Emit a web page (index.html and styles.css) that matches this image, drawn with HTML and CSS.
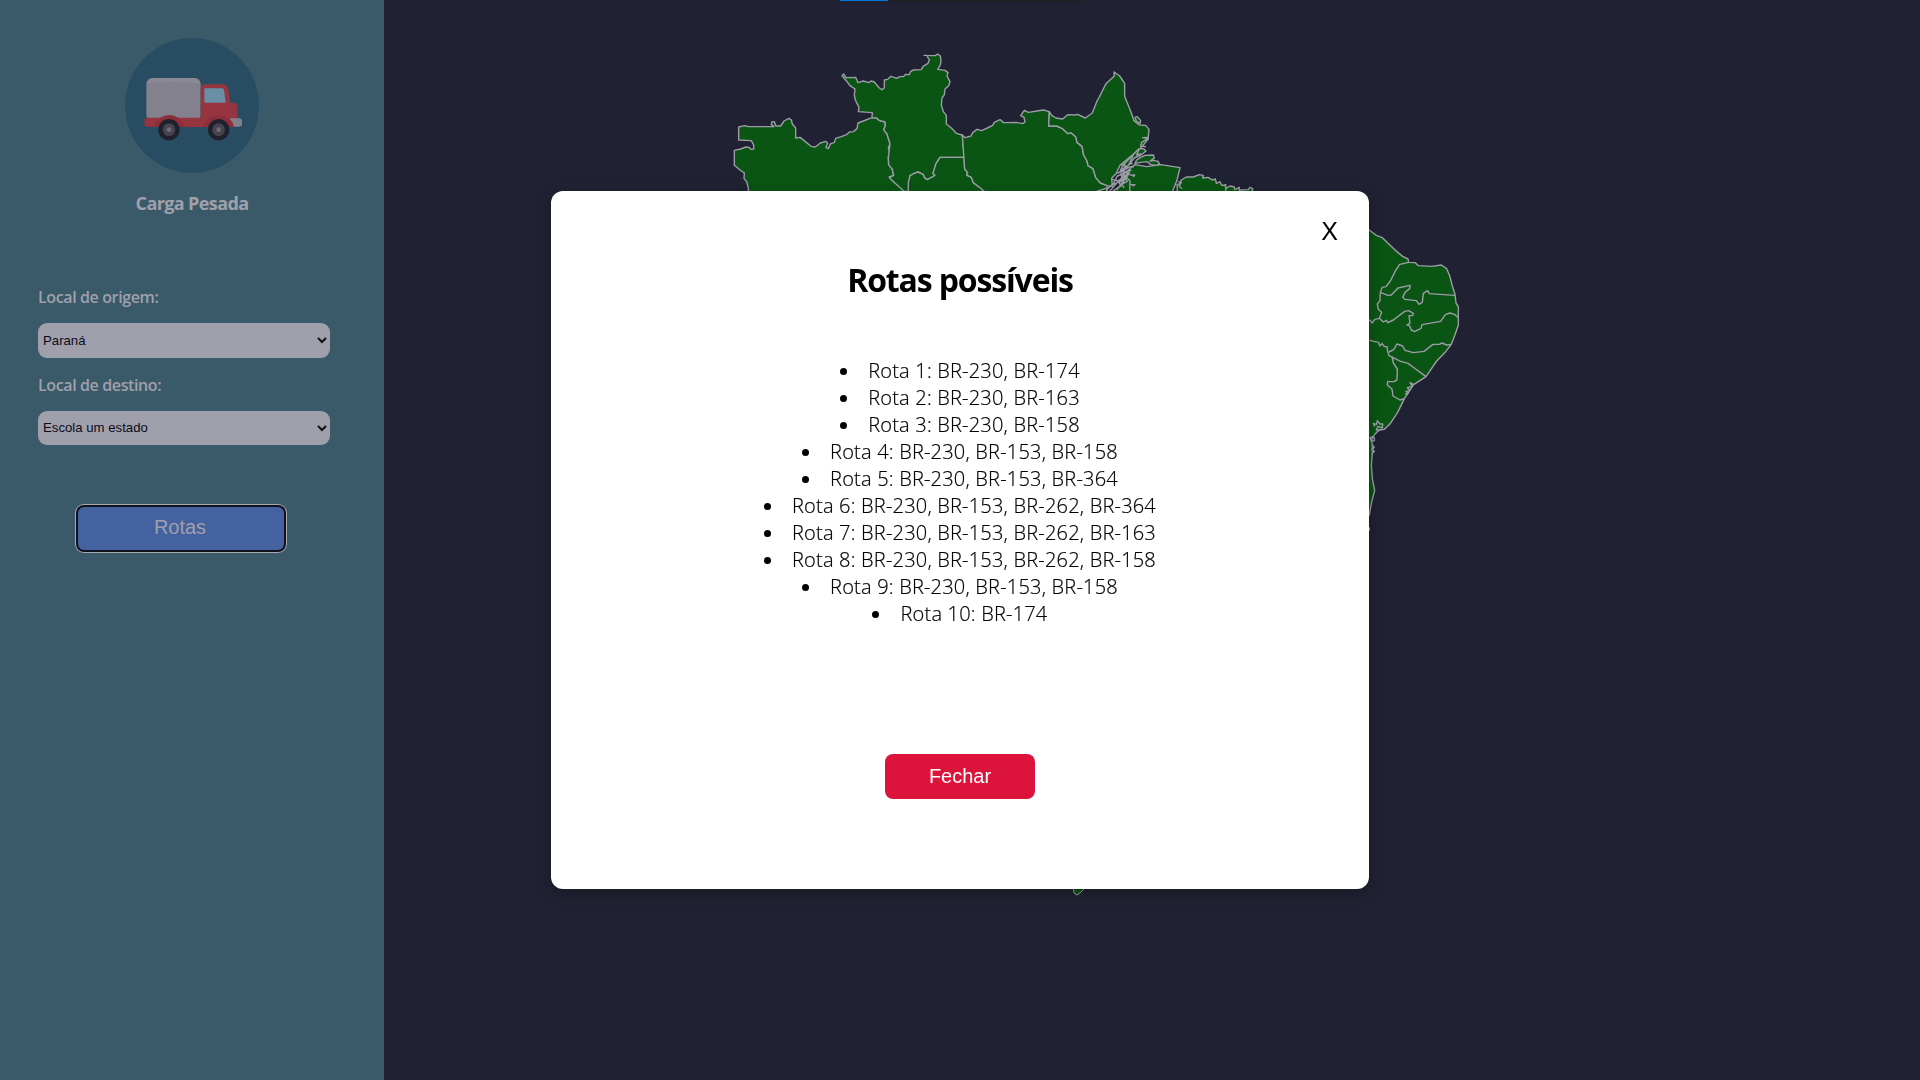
FILE: index.html
```html
<!DOCTYPE html>
<html lang="pt-BR">
<head>
<meta charset="utf-8">
<title>Carga Pesada</title>
<link rel="stylesheet" href="styles.css">
</head>
<body>
<div class="page">
  <aside class="sidebar">
    <div class="brand">
      <svg class="logo" viewBox="75 54 402 405">
        <ellipse cx="276" cy="256.500" rx="201" ry="202.500" fill="#284d62"/>
        <rect x="139" y="174" width="163" height="128" rx="18" fill="#84818f"/>
        <path d="M141 190Q144 176 157 175H284Q299 177 301 190Q222 182 141 190Z" fill="#8c8997"/>
        <path d="M143 293H302V207Q302 193 316 193H368Q382 193 385 207L391 248H400Q412 249 413 262V296L402 321H145Q133 321 133 308V303Q133 294 143 293Z" fill="#963440"/>
        <path d="M160 321Q176 285 208 285Q240 285 256 321Z" fill="#8c2f3b"/>
        <path d="M309 321Q325 285 356 285Q389 288 403 321Z" fill="#8c2f3b"/>
        <path d="M313 205H367Q371 205 372 210L377 248H313Z" fill="#698ea6"/>
        <path d="M388 295H418Q426 296 426 304V312Q426 320 418 320H402Q399 305 388 295Z" fill="#84818f"/>
        <g fill="#20202c"><circle cx="207" cy="329" r="32"/><circle cx="356" cy="329" r="32"/></g>
        <g fill="#46434f"><circle cx="207" cy="329" r="19"/><circle cx="356" cy="329" r="19"/></g>
        <g fill="#706d7a"><circle cx="207" cy="329" r="7"/><circle cx="356" cy="329" r="7"/></g>
      </svg>
      <h1 class="brand-name">Carga Pesada</h1>
    </div>
    <form class="form">
      <label class="label" for="origem">Local de origem:</label>
      <select class="select" id="origem"><option>Paraná</option></select>
      <label class="label" for="destino">Local de destino:</label>
      <select class="select select-destination" id="destino"><option>Escola um estado</option></select>
      <button class="routes-button" type="button">Rotas</button>
    </form>
  </aside>
  <main class="main">
    <svg class="map" viewBox="384 0 1536 1080">
      <path d="M840 .5H888" stroke="#0078d4" fill="none"/>
      <path d="M888 .5H1081" stroke="#1f1f1f" fill="none"/>
      <g class="states" transform="translate(720 40) scale(.333333)">
        <path d="M86 470L85 445L81 427L72 415L73 399L60 390L43 376V331L62 327L78 321L88 322L92 328L101 327V315L94 302L56 300V261L75 257L84 260H162L154 254L156 245H163L168 258L182 258L192 243L207 235L214 240L217 252L227 264V294L240 292L256 305L273 319L286 321L301 309L317 304L323 310L318 322L325 326L332 311L343 308L347 295L364 290L381 283L388 276L400 275L411 266L414 249L430 243L456 233L470 234L477 241L495 246L496 257L491 269L501 282L510 311L505 323L509 337L505 352L506 374L517 388L521 407L508 411L514 419L544 441L552 454V470Z"/>
        <path d="M456 233L457 218L415 215L417 202L406 180L403 165L405 147L390 137L379 122L366 107L371 102L378 113L407 112L414 128L430 123L446 128L454 123L463 126L478 144L486 149L493 144V120L503 118L513 109L530 115L539 110L550 110L557 103L568 104L572 94L580 90L604 89L609 79L624 70L628 60L620 46L612 46L646 47L653 42L661 48L663 64L660 77L653 88L675 91L684 98L681 108L690 125L686 137L675 147L673 164L666 174L664 195L670 215L679 226V252L694 264L709 280L727 285L733 352H660L648 371L639 400L645 406L632 415L622 419L615 415L609 403L594 396L583 400L570 407L565 454L552 454L514 419L508 411L521 407L517 388L506 374L505 352L510 311L501 282L491 269L496 257L495 246L477 241L470 234Z"/>
        <path d="M565 470V428L570 407L583 400L594 396L609 403L615 415L622 419L645 406L639 400L648 371L660 352H733L734 387L743 398L740 405L754 412L760 428L785 447L810 470Z"/>
        <path d="M727 285L735 293L753 288L758 278L771 268L785 272L802 264L818 256L823 247L840 239L851 248L889 247L908 251L915 246L912 232L902 227L913 211L925 217L970 210L988 215L986 258L1010 258L1026 265L1044 281L1053 278L1067 290L1071 307L1086 319L1091 345L1101 363L1104 377L1119 386L1127 412L1141 429L1162 437L1158 470H810L785 447L760 428L754 412L740 405L743 398L734 387Z"/>
        <path d="M988 215L995 226L1008 234L1028 237L1043 224L1064 225L1073 223L1096 234L1117 219L1131 183L1138 171L1158 131L1183 108L1182 96L1199 108L1214 130L1214 169L1234 219L1242 242L1258 255L1277 256L1287 268L1284 298L1262 324L1240 343L1218 361L1200 376L1189 400L1175 415L1177 439L1162 437L1141 429L1127 412L1119 386L1104 377L1101 363L1091 345L1086 319L1071 307L1067 290L1053 278L1044 281L1026 265L1010 258L986 258Z"/>
        <path d="M1177 470L1180 452L1200 439L1220 405L1230 385L1245 374L1280 380L1322 374L1380 383L1377 395L1371 421L1351 470Z"/>
        <path d="M1373 470L1371 434L1379 431L1384 420L1399 411L1420 411L1438 404L1450 406L1448 414L1464 412L1477 420L1486 417L1489 430L1500 425L1505 436L1515 435L1518 445L1530 438L1543 441L1544 449L1558 442L1557 450L1585 449L1590 442L1598 446L1595 470Z"/>
        <path d="M1249 244L1245 232L1252 230L1262 242L1260 250Z"/>
        <path d="M1245 370L1250 360L1262 352L1275 346L1300 345L1303 354L1290 363L1301 361L1314 364L1318 371L1310 376L1292 374L1282 365L1262 367Z"/>
        <path d="M1224 360L1248 335L1256 327L1271 326L1278 333L1263 345L1243 354L1223 378L1200 395L1207 378Z"/>
        <path d="M1284 292L1268 293L1284 296L1265 307L1262 318L1278 320M1257 328L1250 345L1263 341M1240 343L1227 374L1238 369M1189 400L1205 395L1228 381L1242 380M1203 374L1223 380L1205 388L1214 399L1234 390M1175 418L1198 423L1216 397L1228 388M1160 450L1181 429L1192 408L1221 397M1168 455L1198 420L1230 398M1190 450L1211 423L1229 398M1205 397L1230 423L1229 470M1229 405H1244L1240 411M1230 434H1245L1237 438M1129 454L1162 444L1184 431L1208 421L1221 401M1210 366L1216 378L1208 390L1222 400L1214 412L1222 424L1206 432L1212 444M1200 400L1208 412L1198 430L1205 440M1517 432V463M1375 425L1384 427L1377 438L1386 446" fill="none"/>
      </g>
      <g class="states" transform="translate(1350 200) scale(.333333)">
        <path d="M-10 78L58 90L79 106L97 113L136 151L158 169L174 177L176 187L196 188L205 197L244 199L274 195L290 206L299 227L307 258L315 283L318 309L325 320V375L315 404L304 433L287 455L260 483L228 530L191 554L163 596L143 637L119 673L103 688L88 690L75 702L65 718L68 750L64 795L67 835L74 871L64 910L58 945L20 990H-10Z"/>
        <path d="M176 187L149 193L137 211L121 243L108 260L97 262L91 277L90 302L82 312L85 328L95 337L88 355L74 358L67 369L58 359M91 277L114 286L124 285L144 264L180 256L179 266L165 277L158 292L165 298L199 302L207 313L217 307L220 280L233 272L238 281L315 286M88 355L100 366L109 361L113 368L130 360L164 334L176 332L190 340L188 347L177 347L180 369L171 375L178 376L184 390L194 395L213 385L216 374L272 364L286 344L300 339L315 344L325 353M58 421L85 427L90 438L96 430L103 440H111L113 454L117 467L152 484L174 490L197 507L228 530M117 456L131 449L141 432L158 438L165 451L190 458L222 454L249 433L268 433L276 429L290 435L304 433M126 470L130 489L142 507L141 539L133 545L113 545L112 555L126 567L129 588L150 600L163 596M191 554L180 548L187 559L172 563L180 571L168 574L175 580L165 582M74 680L70 670L79 674L82 662L90 672L98 672L97 684L84 679L79 690H91M68 710L60 714L64 724L73 722L73 714ZM67 735L73 742L65 748L73 754L65 762M58 982V992" fill="none"/>
      </g>
      <path class="states" d="M1073 886L1074 893L1077 895L1080 893L1085 888Z"/>
    </svg>
  </main>
</div>
<div class="overlay">
  <section class="modal">
    <button class="close-x" type="button">X</button>
    <h2 class="modal-title">Rotas possíveis</h2>
    <ul class="routes">
      <li>Rota 1: BR-230, BR-174</li>
      <li>Rota 2: BR-230, BR-163</li>
      <li>Rota 3: BR-230, BR-158</li>
      <li>Rota 4: BR-230, BR-153, BR-158</li>
      <li>Rota 5: BR-230, BR-153, BR-364</li>
      <li>Rota 6: BR-230, BR-153, BR-262, BR-364</li>
      <li>Rota 7: BR-230, BR-153, BR-262, BR-163</li>
      <li>Rota 8: BR-230, BR-153, BR-262, BR-158</li>
      <li>Rota 9: BR-230, BR-153, BR-158</li>
      <li>Rota 10: BR-174</li>
    </ul>
    <button class="close-button" type="button">Fechar</button>
  </section>
</div>
</body>
</html>
```
FILE: styles.css
```css
* { box-sizing: border-box; }
body {
  margin: 0;
  overflow: hidden;
  background: #202233;
  font-family: "Open Sans", "Noto Sans", sans-serif;
}
button, select { font-family: "Liberation Sans", Arial, sans-serif; }
.page { display: flex; height: 100vh; }
.sidebar {
  width: 384px;
  flex: none;
  padding: 38px 38px 0;
  background: #3a5a6a;
  color: #a0a0ac;
}
.brand { display: flex; flex-direction: column; align-items: center; }
.logo { width: 134px; height: 135px; }
.brand-name {
  margin: 17px 0 0;
  font-size: 18px;
  line-height: 26px;
  font-weight: 700;
  letter-spacing: -0.62px;
}
.form { display: flex; flex-direction: column; align-items: flex-start; margin-top: 69px; }
.label {
  height: 24px;
  margin-bottom: 14px;
  font-size: 16px;
  line-height: 24px;
  font-weight: 600;
  letter-spacing: -0.38px;
}
.select {
  width: 292px;
  height: 35px;
  margin-bottom: 15px;
  padding: 0 0 0 1px;
  border: 0;
  border-radius: 9px;
  background-color: #a0a0ac;
  color: #0c0c18;
  font-size: 13.2px;
}
.select-destination { height: 34px; padding-bottom: 1px; }
.routes-button {
  width: 206px;
  height: 43px;
  margin: 47px 0 0 40px;
  padding: 0 2px 2px 0;
  border: 0;
  border-radius: 6px;
  background: #4461a0;
  box-shadow: 0 0 0 2px #11111c, 0 0 0 3px #a8a8b2;
  color: #a0a0ac;
  font-size: 20px;
}
.main { flex: 1; }
.map { display: block; width: 100%; height: 100%; }
.states { fill: #0a5513; stroke: #9c9ca7; stroke-linejoin: round; }
.states path { stroke-width: 1.4px; vector-effect: non-scaling-stroke; }
.overlay {
  position: fixed;
  inset: 0;
  display: flex;
  align-items: center;
  justify-content: center;
}
.modal {
  display: flex;
  flex-direction: column;
  align-items: center;
  width: 818px;
  height: 698px;
  padding: 25px 31px;
  border-radius: 12px;
  background: #fff;
  box-shadow: 0 4px 15px rgba(0, 0, 0, .3);
  color: #000;
}
.close-x {
  align-self: flex-end;
  height: 30px;
  padding: 0;
  border: 0;
  background: none;
  color: #000;
  font-size: 25px;
  line-height: 30px;
}
.modal-title {
  margin: 13px 0 0;
  font-size: 32px;
  line-height: 42px;
  letter-spacing: -1.15px;
}
.routes {
  margin: 56px 0 0;
  padding: 0;
  list-style: none;
  text-align: center;
  font-size: 20px;
  line-height: 27px;
  font-weight: 300;
  letter-spacing: 0.2px;
  -webkit-text-stroke: 0.2px #000;
}
.routes li::before {
  content: "";
  display: inline-block;
  width: 7px;
  height: 7px;
  margin-right: 21px;
  border-radius: 50%;
  background: #000;
  vertical-align: 3px;
}
.close-button {
  width: 150px;
  height: 45px;
  margin-top: 127px;
  border: 0;
  border-radius: 8px;
  background: #dc143c;
  color: #fff;
  font-size: 20px;
}
```
